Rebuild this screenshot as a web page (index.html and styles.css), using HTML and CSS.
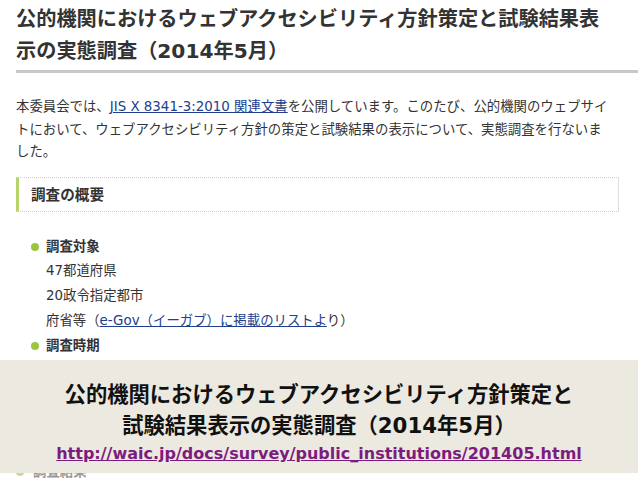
FILE: index.html
```html
<!DOCTYPE html>
<html lang="ja">
<head>
    <meta charset="UTF-8" />
    <meta name="viewport" content="width=device-width, initial-scale=1.0" />
    <title>公的機関におけるウェブアクセシビリティ方針策定と試験結果表示の実態調査（2014年5月）</title>
    <link rel="stylesheet" href="styles.css">
</head>
<body>
    <div class="page">
        <h1 class="page-title">公的機関におけるウェブアクセシビリティ方針策定と試験結果表示の実態調査（2014年5月）</h1>

        <div class="content">
            <p class="lead">本委員会では、<a href="#" class="link">JIS X 8341-3:2010 関連文書</a>を公開しています。このたび、公的機関のウェブサイ<br>トにおいて、ウェブアクセシビリティ方針の策定と試験結果の表示について、実態調査を行ないま<br>した。</p>

            <h2 class="section-title">調査の概要</h2>

            <ul class="outline">
                <li class="outline__head">調査対象</li>
                <li>47都道府県</li>
                <li>20政令指定都市</li>
                <li>府省等（<a href="#" class="link">e-Gov（イーガブ）に掲載のリストよ</a>り）</li>
                <li class="outline__head">調査時期</li>
                <li>2014年3月</li>
                <li class="outline__head">調査方法</li>
                <li>各ウェブサイトを目視で確認</li>
                <li>&nbsp;</li>
            </ul>

            <div class="outline__next">調査結果</div>
        </div>
    </div>

    <!-- slide caption band laid over the page -->
    <div class="caption">
        <div class="caption__title">公的機関におけるウェブアクセシビリティ方針策定と<br>試験結果表示の実態調査（2014年5月）</div>
        <a href="#" class="caption__url">http://waic.jp/docs/survey/public_institutions/201405.html</a>
    </div>
</body>
</html>
```

FILE: styles.css
```css
/* General styles */
body {
    margin: 0;
    background: #fff;
    color: #333;
    font-family: "DejaVu Sans", "Noto Sans CJK JP", sans-serif;
    overflow: hidden;
}

.page {
    padding-left: 16px;
    height: 479px;
    overflow: hidden;
}

.page-title {
    margin: 0;
    padding: 3px 30px 3px 0;
    font-size: 20.2px;
    line-height: 32px;
    font-weight: bold;
    color: #333;
    border-bottom: 3px solid #c8c8c8;
}

.content {
    width: 603px;
    font-size: 13.4px;
}

.lead {
    margin: 23px 0 0;
    line-height: 22.5px;
    white-space: nowrap;
}

.link {
    color: #213e8d;
    text-decoration: underline;
}

.section-title {
    margin: 13px 0 0;
    padding-left: 12px;
    font-size: 14.6px;
    line-height: 33px;
    font-weight: bold;
    color: #333;
    border-top: 1px dotted #cfcfcf;
    border-bottom: 1px dotted #cfcfcf;
    border-right: 1px solid #dedede;
    border-left: 3px solid #b5d56a;
}

.outline {
    list-style: none;
    margin: 23px 0 0;
    padding-left: 30px;
    line-height: 24.9px;
}

.outline__head {
    font-weight: bold;
}

.outline__head::before {
    content: "";
    display: inline-block;
    width: 8px;
    height: 8px;
    margin-left: -15px;
    margin-right: 7px;
    border-radius: 50%;
    background: #9cc43e;
    vertical-align: 0;
}

.outline__next {
    margin-top: 1px;
    line-height: 24px;
    color: #999;
    font-weight: bold;
}

.outline__next::before {
    content: "";
    display: inline-block;
    width: 8px;
    height: 8px;
    margin-right: 9px;
    border-radius: 50%;
    background: #d8d39a;
}

/* caption band */
.caption {
    position: absolute;
    top: 360px;
    left: 0;
    width: 638px;
    height: 113px;
    box-sizing: border-box;
    padding-top: 19px;
    background: #ece9e0;
    text-align: center;
}

.caption__title {
    font-size: 21.3px;
    line-height: 31px;
    font-weight: bold;
    color: #111;
}

.caption__url {
    display: inline-block;
    margin-top: -1px;
    font-size: 16px;
    line-height: 27px;
    font-weight: bold;
    color: #7d1b7e;
    text-decoration: underline;
}
```
